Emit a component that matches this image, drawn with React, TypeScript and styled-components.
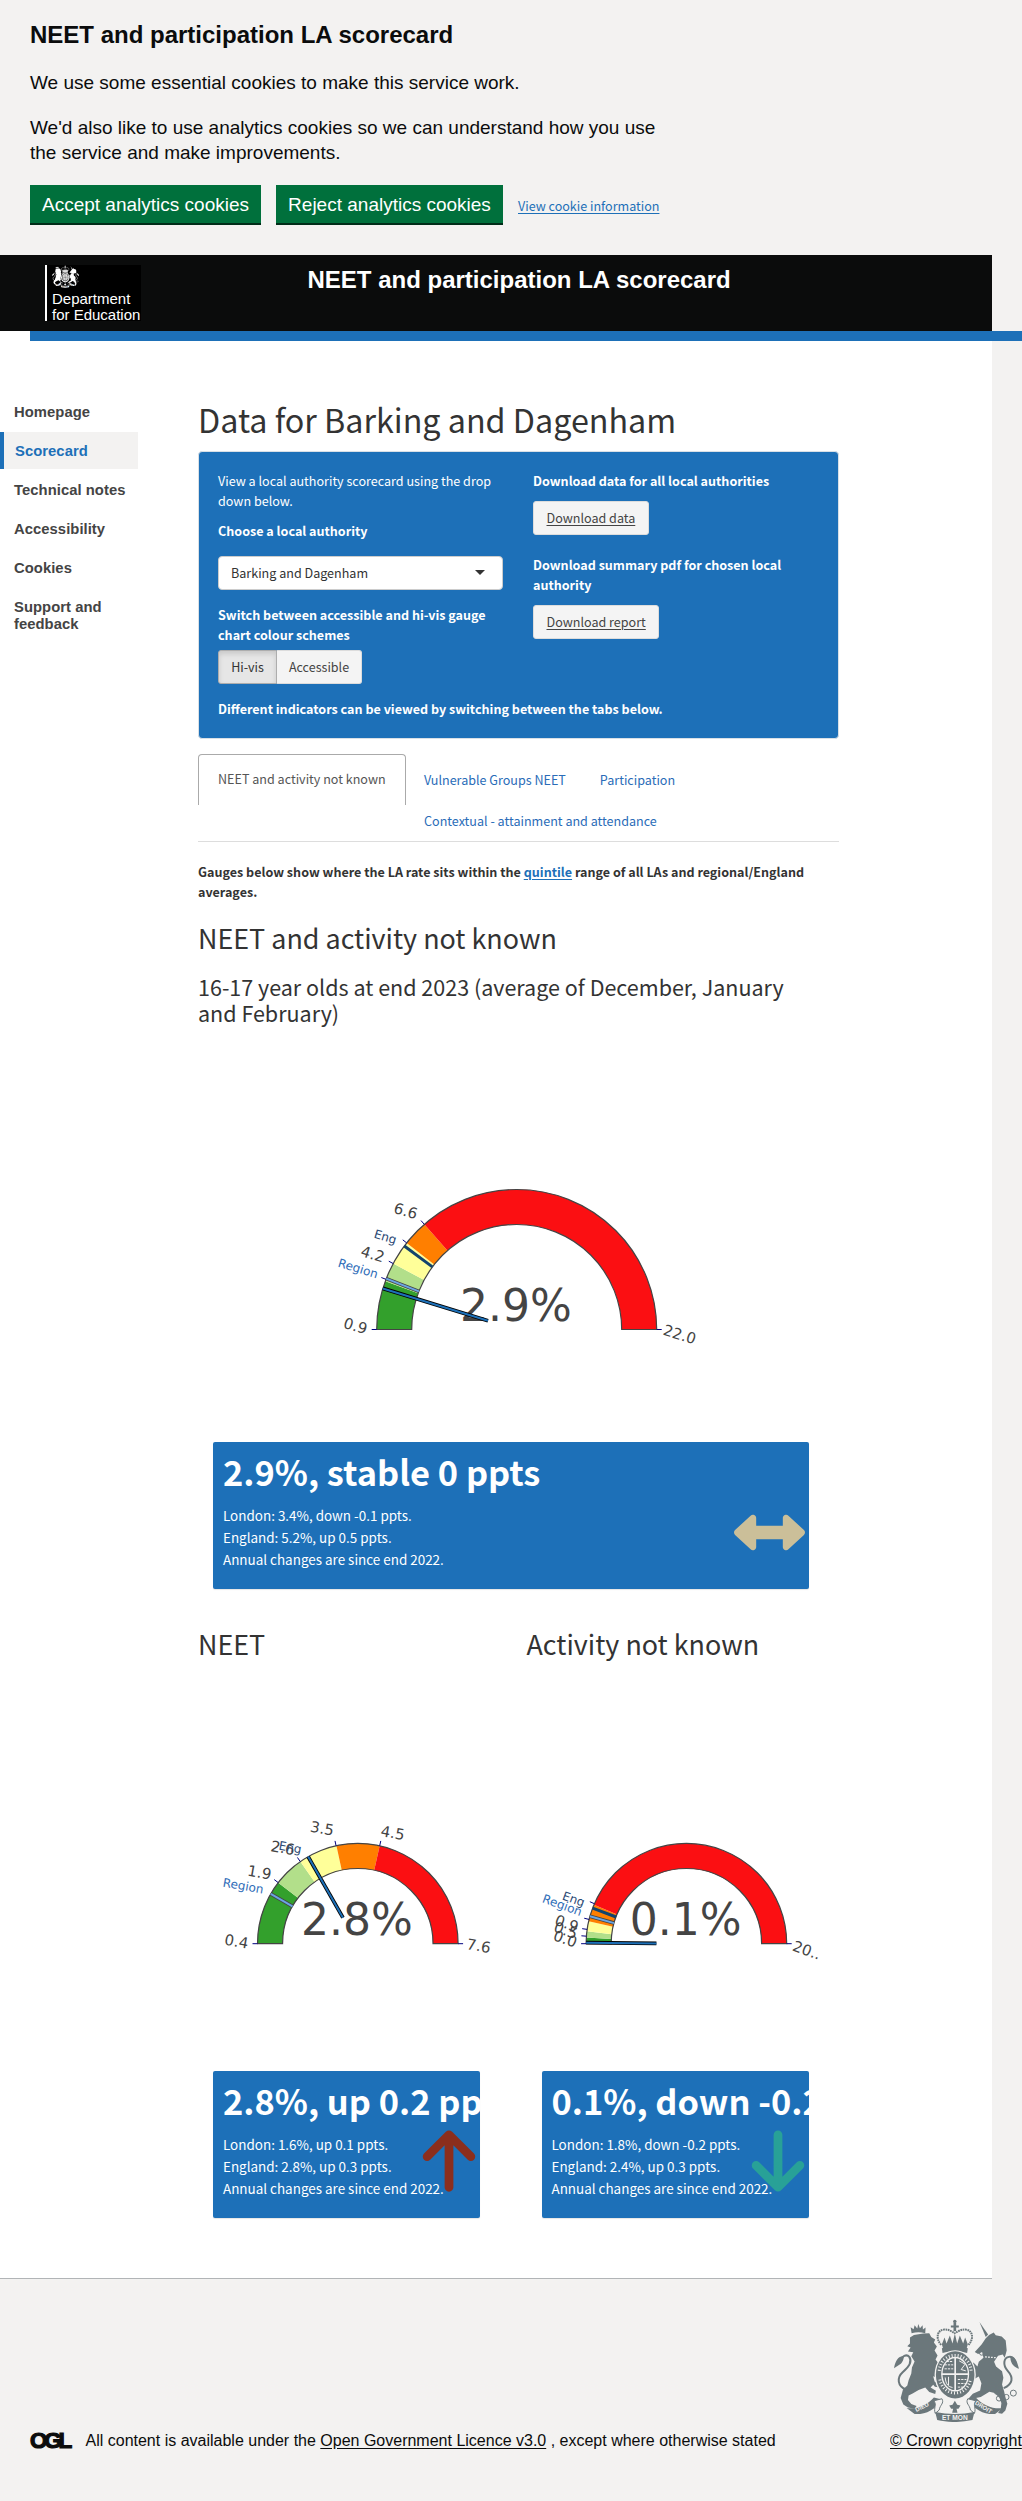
import React from "react";
import styled, { createGlobalStyle } from "styled-components";
import { FaLeftRight, FaArrowUp, FaArrowDown } from "react-icons/fa6";

const BLUE = "#1d70b8";
const GREY = "#f3f2f1";
const SOURCE = `"Noto Sans CJK SC", "Noto Sans", sans-serif`;
const ARIAL = `"Liberation Sans", Arial, sans-serif`;

const GlobalStyle = createGlobalStyle`
  *, *::before, *::after { box-sizing: border-box; }
  body {
    margin: 0;
    background: ${GREY};
    color: #333;
    font-family: ${SOURCE};
    font-size: 12.57px;
    line-height: 20px;
    overflow-x: hidden;
  }
  h1, h2, h3, h4, p, ul { margin: 0; padding: 0; font-weight: 400; }
`;

/* ---------- cookie banner ---------- */

const CookieBanner = styled.section`
  height: 255px;
  padding: 20px 30px 0;
  color: #0b0c0c;
  font-family: ${ARIAL};
`;
const BannerTitle = styled.h2`
  && { font-weight: 700; margin-bottom: 20px; }
  font-size: 24px;
  line-height: 30px;
`;
const BannerText = styled.p`
  && { margin-bottom: 20px; }
  width: 645px;
  font-size: 19px;
  line-height: 25px;
`;
const BannerActions = styled.div`
  display: flex;
  gap: 15px;
`;
const GreenButton = styled.button<{ $width: number }>`
  width: ${(p) => p.$width}px;
  height: 38px;
  padding: 0;
  border: 0;
  background: #00703c;
  box-shadow: 0 2px 0 #002d18;
  color: #fff;
  font: 19px/19px ${ARIAL};
`;
const CookieLink = styled.a`
  margin-top: 11px;
  color: ${BLUE};
  font: 12.55px/20px ${SOURCE};
  text-decoration: underline;
  text-underline-offset: 2px;
`;

/* ---------- header ---------- */

const Header = styled.header`
  display: flex;
  width: 992px;
  height: 76px;
  padding: 10px 0 0 45px;
  background: #0b0c0c;
  color: #fff;
`;
const Logo = styled.div`
  width: 96px;
  height: 56px;
  padding-left: 5px;
  border-left: 2px solid #fff;
  background: #000;
  font: 15px/16px ${ARIAL};
  white-space: nowrap;
  svg { display: block; margin-bottom: 3px; }
`;
const HeaderTitle = styled.h1`
  && { font-weight: 700; }
  margin-left: 166.5px;
  font-family: ${ARIAL};
  font-size: 24px;
  line-height: 30px;
`;
const BlueBar = styled.div`
  height: 10px;
  background: linear-gradient(to right, #fff 30px, ${BLUE} 30px);
`;

/* ---------- page body ---------- */

const Page = styled.div`
  display: flex;
  width: 992px;
  height: 1937px;
  background: #fff;
`;
const Sidebar = styled.nav`
  display: flex;
  flex-direction: column;
  gap: 2.1px;
  width: 138px;
  padding-top: 52px;
  font: 700 14.8px/17px ${ARIAL};
  letter-spacing: 0.05px;
`;
const NavItem = styled.a<{ $active?: boolean }>`
  padding: 11px 8px 9px ${(p) => (p.$active ? 11 : 14)}px;
  border-left: ${(p) => (p.$active ? `4px solid ${BLUE}` : "0")};
  background: ${(p) => (p.$active ? GREY : "transparent")};
  color: ${(p) => (p.$active ? BLUE : "#444")};
`;
const Main = styled.main`
  width: 640.5px;
  margin-left: 60px;
  padding-top: 58px;
`;
const PageTitle = styled.h2`
  && { margin-bottom: 12px; }
  font-size: 32.28px;
  line-height: 40px;
`;

const Panel = styled.section`
  height: 288px;
  padding: 19px;
  border: 1px solid #d9e0e6;
  border-radius: 4px;
  background: ${BLUE};
  color: #fff;
`;
const PanelColumns = styled.div`
  display: grid;
  grid-template-columns: 285px 275px;
  column-gap: 30px;
  height: 228px;
`;
const Field = styled.div<{ $gap?: number }>`
  margin-bottom: ${(p) => p.$gap ?? 0}px;
`;
const Label = styled.div<{ $after?: number }>`
  margin-bottom: ${(p) => p.$after ?? 0}px;
  font-weight: 700;
`;
const Select = styled.div`
  display: flex;
  align-items: center;
  justify-content: space-between;
  height: 34px;
  padding: 0 17px 0 12px;
  border: 1px solid #ccc;
  border-radius: 4px;
  background: #fff;
  color: #333;
`;
const Caret = styled.span`
  border: 5px solid transparent;
  border-top-color: #333;
  border-bottom: 0;
  margin-top: -2px;
`;
const Toggle = styled.div`
  display: flex;
`;
const ToggleButton = styled.button<{ $on?: boolean }>`
  height: 34px;
  width: ${(p) => (p.$on ? 59 : 85)}px;
  padding: 0;
  border: 1px solid ${(p) => (p.$on ? "#adadad" : "#dcdcdc")};
  border-left-width: ${(p) => (p.$on ? 1 : 0)}px;
  border-radius: ${(p) => (p.$on ? "3px 0 0 3px" : "0 3px 3px 0")};
  background: ${(p) => (p.$on ? "#e6e6e6" : "#f4f4f4")};
  box-shadow: ${(p) => (p.$on ? "inset 0 3px 5px rgba(0,0,0,.125)" : "none")};
  color: ${(p) => (p.$on ? "#333" : "#444")};
  font: 12.55px/20px ${SOURCE};
`;
const DownloadButton = styled.a`
  display: inline-block;
  height: 34px;
  padding: 6px 12.5px;
  border: 1px solid #ddd;
  border-radius: 3px;
  background: #f4f4f4;
  color: #444;
  text-decoration: underline;
  text-underline-offset: 2px;
`;

const Tabs = styled.div`
  display: flex;
  height: 88px;
  margin-top: 15px;
  border-bottom: 1px solid #ddd;
`;
const ActiveTab = styled.div`
  width: 208px;
  height: 51px;
  padding: 14px 0 0 19px;
  border: 1px solid #aaa;
  border-bottom: 0;
  border-radius: 4px 4px 0 0;
  color: #555;
`;
const TabGroup = styled.div`
  display: flex;
  flex-wrap: wrap;
  align-content: flex-start;
  column-gap: 34px;
  row-gap: 21px;
  width: 340px;
  padding: 16px 0 0 18px;
  color: #2a6cb8;
`;

const Note = styled.p`
  && { font-weight: 700; margin-top: 20px; }
  a { color: ${BLUE}; text-decoration: underline; text-underline-offset: 2px; }
`;
const SectionTitle = styled.h3`
  font-size: 26.9px;
  line-height: 33px;
`;
const Intro = styled.div`
  height: 110px;
  padding-top: 19px;
`;
const SubTitle = styled.h4`
  && { margin-top: 20px; }
  width: 610px;
  font-size: 21.53px;
  line-height: 26.4px;
`;
const Columns = styled.div`
  display: grid;
  grid-template-columns: 312px 312px;
  column-gap: 16.5px;
  margin-top: 38px;
`;

const ValueBox = styled.div`
  position: relative;
  height: 147px;
  margin: 0 30px 0 15px;
  padding: 8px 0 0 10px;
  overflow: hidden;
  border-radius: 2px;
  background: ${BLUE};
  box-shadow: 0 1px 1px rgba(0, 0, 0, 0.1);
  color: #fff;
  font-size: 13.45px;
  line-height: 22px;
  white-space: nowrap;
`;
const Value = styled.h3`
  && { font-weight: 700; margin-bottom: 11.5px; }
  font-size: 34.4px;
  line-height: 42px;
`;
const BoxIcon = styled.div<{ $color: string; $right: number }>`
  position: absolute;
  top: 54.5px;
  right: ${(p) => p.$right}px;
  display: flex;
  color: ${(p) => p.$color};
`;

const Drawing = styled.svg`
  display: block;
  overflow: visible;
  font-family: "DejaVu Sans", Verdana, sans-serif;
`;

/* ---------- footer ---------- */

const FooterRule = styled.div`
  width: 992px;
  height: 1px;
  background: #b1b4b6;
`;
const Footer = styled.footer`
  display: flex;
  align-items: flex-end;
  height: 172px;
  padding-left: 30px;
  color: #0b0c0c;
  font: 16px/20px ${ARIAL};
  white-space: nowrap;
  a { color: inherit; text-decoration: underline; text-underline-offset: 2px; }
`;
const Ogl = styled.span`
  width: 55.5px;
  font-size: 22.5px;
  font-weight: 700;
  letter-spacing: -3.3px;
  -webkit-text-stroke: 1.2px #0b0c0c;
`;
const Licence = styled.div`
  width: 804.5px;
`;
const Crown = styled.div`
  display: flex;
  flex-direction: column;
  gap: 9px;
  width: 132px;
  overflow: hidden;
  svg { margin-left: 4px; }
`;

/* ---------- royal arms ---------- */

function Arms({ width, height, color, ground }: { width: number; height: number; color: string; ground: string }) {
  const motto = { fontFamily: "Liberation Sans", fontWeight: 700, fill: ground } as const;
  return (
    <svg width={width} height={height} viewBox="102 55 376 308" fill={color} stroke="none">
      {/* crown */}
      <circle cx="285" cy="61" r="5" />
      <path d="M281 64h8v10h8v6h-8v10h-8V80h-8v-6h8z" />
      <path d="M244 132C226 112 232 88 252 86c16-2 26 8 33 10 7-2 17-12 33-10 20 2 26 26 8 46" fill="none" stroke={color} strokeWidth="6" strokeDasharray="5 2" />
      <path d="M246 130l8-20 6 18 10-24 8 24 7-30 7 30 8-24 10 24 6-18 8 20-4 14c-26-8-44-8-70 0z" />
      <path d="M246 142c26-8 52-8 78 0l-2 14c-26-7-48-7-74 0z" />
      {/* lion */}
      <path d="M155 97l-3-18 9 6 3-12 8 10 3-14 5 13 8-9 1 13 8-6-1 17c-14-4-27-4-41 0z" />
      <path d="M150 110l12-8 28-4 18-1 6 11 12 8-4 9 9 12-7 12 9 15-6 12 9 12-8 10 10 18-8 14-10-4 4 16 14 8 1 10-14-2-5-6-8 8 16 10-2 10-18-6-12-14-20 8-18 10-12 6-2 14 10 12 16 6-6 8-20-4-14-9-8-19 7-26 13-12 4-16 8-20 2-18 8-18-10-16 6-12-16-2 8-12-10-4 8-8z" />
      <path d="M138 266c-26-10-28-36-10-52 22-18 28-34 20-46-8-10-22-2-30 12" fill="none" stroke={color} strokeWidth="6" />
      <path d="M102 202c4-24 14-38 30-36-2 16-8 22-14 26z" />
      {/* unicorn */}
      <path d="M359 63l26 38-7 7z" />
      <path d="M366 130l12-18 10-10 14-7 6 8 18 4 12 12 3 30-6 22-6-10-14 4-12 18 6 14 18 14 4 20-4 20 6 20 4 18 6 20-6 20-10 10-12-2 8-12 2-18-6-16-14-14-16-4-26 16-22 4-10 12-8-8 16-18 22-10 4-22-8-20-22 12-12-2-6-26-12-12 8-8 14 10 10 18 8-4-10-20 6-10 12 12 4-14 14-12-4-18-12 6-10-6z" />
      <path d="M432 262c28-12 30-32 12-52-16-18-12-40 4-42 14-2 18 10 20 22" fill="none" stroke={color} strokeWidth="6" />
      <path d="M452 168c18 0 20 16 26 36-18-6-26-18-26-36z" />
      <g fill="none" stroke={color} strokeWidth="3">
        <circle cx="410" cy="274" r="6" /><circle cx="418" cy="293" r="8" /><circle cx="440" cy="289" r="8" />
        <circle cx="461" cy="277" r="9" /><circle cx="366" cy="156" r="7" />
      </g>
      <path d="M376 168l52 4" stroke={ground} strokeWidth="4" strokeDasharray="5 4" />
      {/* garter and shield */}
      <ellipse cx="286" cy="222" rx="62" ry="74" fill={ground} />
      <ellipse cx="286" cy="222" rx="58" ry="71" />
      <ellipse cx="286" cy="220" rx="42" ry="52" fill={ground} />
      <ellipse cx="286" cy="220" rx="38" ry="48" />
      <path d="M286 170v100M246 220h80" stroke={ground} strokeWidth="5" />
      <path d="M254 192h26M254 204h26M260 182h20M294 236h26M294 248h24M294 259h16" stroke={ground} strokeWidth="3" strokeDasharray="7 3" />
      <path d="M298 180l18 10-12 16 14 4M256 230c2 22 10 28 22 30M266 228v26" fill="none" stroke={ground} strokeWidth="3" />
      <path d="M238 210c4-62 92-62 96 0M240 236c10 54 82 54 92 0" fill="none" stroke={ground} strokeWidth="9" strokeDasharray="3 6" />
      {/* ribbon */}
      <path d="M140 322c30 4 60-8 82-32l24 6c-20 32-50 46-82 44z" />
      <path d="M430 322c-30 4-60-8-82-32l-24 6c20 32 50 46 82 44z" />
      <path d="M222 300l24-6c8 14-6 18-8 34l-12 10c-6-18 6-24-4-38zM348 300l-24-6c-8 14 6 18 8 34l12 10c6-18-6-24 4-38z" fill={ground} stroke={color} strokeWidth="3" />
      <path d="M226 334c38 8 80 8 118 0l-6 24c-36 8-72 8-106 0z" />
      <path d="M285 300l7 12 10 2-6 10h-6l3 12h-16l3-12h-6l-6-10 10-2z" />
      <text x="285" y="358" fontSize="20" textAnchor="middle" {...motto}>ET MON</text>
      <text transform="translate(170 334) rotate(-27)" fontSize="18" {...motto}>DIEU</text>
      <text transform="translate(344 310) rotate(31)" fontSize="18" {...motto}>DROIT</text>
    </svg>
  );
}

/* ---------- gauges ---------- */

type Segment = [from: number, to: number, color: string];
type TickLabel = [text: string, dx: number, dy: number, kind?: "region" | "eng"];
interface GaugeProps {
  width: number; height: number; cx: number; cy: number; r: number;
  segments: Segment[]; region: number; england?: number; needle: number;
  ticks: number[]; labels: TickLabel[]; tilt: number; value: string;
}

const GREEN = "#33a02c", LIME = "#b2df8a", YELLOW = "#ffff99", ORANGE = "#ff7f00", RED = "#fb0f12";
const labelColor = { region: "#2f6db8", eng: "#2c4a75", none: "#444" };

function Gauge(g: GaugeProps) {
  const inner = g.r * 0.75;
  const at = (deg: number, r: number) => {
    const a = (deg * Math.PI) / 180;
    return [g.cx - r * Math.cos(a), g.cy - r * Math.sin(a)].map((n) => n.toFixed(2)).join(" ");
  };
  const band = (a: number, b: number) =>
    `M${at(a, g.r)}A${g.r} ${g.r} 0 0 1 ${at(b, g.r)}L${at(b, inner)}A${inner} ${inner} 0 0 0 ${at(a, inner)}Z`;
  const ray = (deg: number, from: number, to: number) => `M${at(deg, from)}L${at(deg, to)}`;
  return (
    <Drawing width={g.width} height={g.height}>
      {g.segments.map(([a, b, c]) => <path key={a} d={band(a, b)} fill={c} />)}
      <path d={band(0, 180)} fill="none" stroke="#444" strokeWidth="1.2" />
      {g.ticks.map((t) => <path key={t} d={ray(t, g.r, g.r + 5)} stroke="#000080" />)}
      <path d={ray(g.region, inner, g.r)} stroke="#444" strokeWidth="3.6" />
      <path d={ray(g.region, inner, g.r)} stroke="#6aa5e3" strokeWidth="2" />
      {g.england !== undefined && <path d={ray(g.england, inner, g.r)} stroke="#12436d" strokeWidth="3" />}
      {g.labels.map(([text, dx, dy, kind], i) => (
        <text
          key={i}
          transform={`translate(${g.cx + dx} ${g.cy + dy}) rotate(${g.tilt})`}
          textAnchor="middle"
          dy="0.36em"
          fontSize={kind ? 12 : 15}
          fill={labelColor[kind ?? "none"]}
        >
          {text}
        </text>
      ))}
      <text x={g.cx - 0.8} y={g.cy - 8.6} textAnchor="middle" fontSize="44" fill="#444">{g.value}</text>
      <path d={ray(g.needle, 30, g.r)} stroke="#000" strokeWidth="3.8" />
      <path d={ray(g.needle, 30, g.r)} stroke={BLUE} strokeWidth="2" />
    </Drawing>
  );
}

interface StatProps {
  value: string;
  lines: string[];
  color: string;
  iconRight: number;
  icon: React.ReactNode;
}

function Stat({ value, lines, color, iconRight, icon }: StatProps) {
  return (
    <ValueBox>
      <Value>{value}</Value>
      {lines.map((l) => <p key={l}>{l}</p>)}
      <p>Annual changes are since end 2022.</p>
      <BoxIcon $color={color} $right={iconRight}>{icon}</BoxIcon>
    </ValueBox>
  );
}

export default function App() {
  return (
    <>
      <GlobalStyle />
      <CookieBanner>
        <BannerTitle>NEET and participation LA scorecard</BannerTitle>
        <BannerText>We use some essential cookies to make this service work.</BannerText>
        <BannerText>We'd also like to use analytics cookies so we can understand how you use the service and make improvements.</BannerText>
        <BannerActions>
          <GreenButton $width={231}>Accept analytics cookies</GreenButton>
          <GreenButton $width={227}>Reject analytics cookies</GreenButton>
          <CookieLink>View cookie information</CookieLink>
        </BannerActions>
      </CookieBanner>

      <Header>
        <Logo>
          <Arms width={27} height={23} color="#fff" ground="#000" />
          <div>Department</div>
          <div>for Education</div>
        </Logo>
        <HeaderTitle>NEET and participation LA scorecard</HeaderTitle>
      </Header>
      <BlueBar />

      <Page>
        <Sidebar>
          <NavItem>Homepage</NavItem>
          <NavItem $active>Scorecard</NavItem>
          <NavItem>Technical notes</NavItem>
          <NavItem>Accessibility</NavItem>
          <NavItem>Cookies</NavItem>
          <NavItem>Support and feedback</NavItem>
        </Sidebar>

        <Main>
          <PageTitle>Data for Barking and Dagenham</PageTitle>
          <Panel>
            <PanelColumns>
              <div>
                <Field $gap={10}>View a local authority scorecard using the drop down below.</Field>
                <Field $gap={15}>
                  <Label $after={15}>Choose a local authority</Label>
                  <Select>Barking and Dagenham<Caret /></Select>
                </Field>
                <Label $after={5}>Switch between accessible and hi-vis gauge chart colour schemes</Label>
                <Toggle>
                  <ToggleButton $on>Hi-vis</ToggleButton>
                  <ToggleButton>Accessible</ToggleButton>
                </Toggle>
              </div>
              <div>
                <Field $gap={20}>
                  <Label $after={10}>Download data for all local authorities</Label>
                  <DownloadButton>Download data</DownloadButton>
                </Field>
                <Label $after={10}>Download summary pdf for chosen local authority</Label>
                <DownloadButton>Download report</DownloadButton>
              </div>
            </PanelColumns>
            <Label>Different indicators can be viewed by switching between the tabs below.</Label>
          </Panel>

          <Tabs>
            <ActiveTab>NEET and activity not known</ActiveTab>
            <TabGroup>
              <span>Vulnerable Groups NEET</span>
              <span>Participation</span>
              <span>Contextual - attainment and attendance</span>
            </TabGroup>
          </Tabs>

          <Note>
            Gauges below show where the LA rate sits within the <a>quintile</a> range of all LAs and regional/England averages.
          </Note>
          <Intro>
            <SectionTitle>NEET and activity not known</SectionTitle>
            <SubTitle>16-17 year olds at end 2023 (average of December, January and February)</SubTitle>
          </Intro>

          <Gauge
            width={640} height={430} cx={318.7} cy={317.5} r={140} tilt={17} value="2.9%"
            segments={[[0, 20.2, GREEN], [20.2, 28.1, LIME], [28.1, 38.2, YELLOW], [38.2, 48.7, ORANGE], [48.7, 180, RED]]}
            region={21.3} england={36.6} needle={17.06}
            ticks={[0, 21, 28.1, 38.2, 48.7, 180]}
            labels={[
              ["0.9", -161.2, -3.8], ["Region", -158.5, -61.2, "region"], ["4.2", -143.9, -75.5],
              ["Eng", -131.2, -92.8, "eng"], ["6.6", -110.9, -118.8], ["22.0", 163.1, 4.8],
            ]}
          />
          <Stat
            value="2.9%, stable 0 ppts"
            lines={["London: 3.4%, down -0.1 ppts.", "England: 5.2%, up 0.5 ppts."]}
            color="#cbbf99"
            iconRight={4}
            icon={<FaLeftRight size={71} />}
          />

          <Columns>
            <div>
              <SectionTitle>NEET</SectionTitle>
              <Gauge
                width={312} height={411} cx={159.8} cy={283.7} r={100.3} tilt={10} value="2.8%"
                segments={[[0, 37.5, GREEN], [37.5, 55, LIME], [55, 77.7, YELLOW], [77.7, 102.6, ORANGE], [102.6, 180, RED]]}
                region={29.8} needle={60.3}
                ticks={[0, 37.5, 55, 77.5, 102.6, 180]}
                labels={[
                  ["0.4", -121.3, -2.4], ["Region", -114.6, -58, "region"], ["1.9", -98.3, -71.4],
                  ["2.6", -75, -96], ["Eng", -67.6, -96.4, "eng"], ["3.5", -35.6, -115.4],
                  ["4.5", 35, -111], ["7.6", 121, 2],
                ]}
              />
              <Stat
                value="2.8%, up 0.2 ppts"
                lines={["London: 1.6%, up 0.1 ppts.", "England: 2.8%, up 0.3 ppts."]}
                color="#8b2e1d"
                iconRight={-4}
                icon={<FaArrowUp size={70} />}
              />
            </div>
            <div>
              <SectionTitle>Activity not known</SectionTitle>
              <Gauge
                width={312} height={411} cx={159.4} cy={283.7} r={100.3} tilt={20} value="0.1%"
                segments={[[0, 3.6, GREEN], [3.6, 7.2, LIME], [7.2, 13, YELLOW], [13, 22.9, ORANGE], [22.9, 180, RED]]}
                region={15.9} england={20.8} needle={0.6}
                ticks={[0, 4.3, 8.2, 14, 23.5, 180]}
                labels={[
                  ["Eng", -112.6, -44.7, "eng"], ["Region", -124, -38.7, "region"], ["0.9", -119.6, -20.4],
                  ["0.5", -120.6, -13.5], ["0.0", -121, -5], ["20..", 120.5, 6.3],
                ]}
              />
              <Stat
                value="0.1%, down -0.2 ppts"
                lines={["London: 1.8%, down -0.2 ppts.", "England: 2.4%, up 0.3 ppts."]}
                color="#28a197"
                iconRight={-4}
                icon={<FaArrowDown size={70} />}
              />
            </div>
          </Columns>
        </Main>
      </Page>
      <FooterRule />
      <Footer>
        <Ogl>OGL</Ogl>
        <Licence>
          All content is available under the <a>Open Government Licence v3.0</a> , except where otherwise stated
        </Licence>
        <Crown>
          <Arms width={125} height={103} color="#6b777b" ground={GREY} />
          <a>© Crown copyright</a>
        </Crown>
      </Footer>
    </>
  );
}
